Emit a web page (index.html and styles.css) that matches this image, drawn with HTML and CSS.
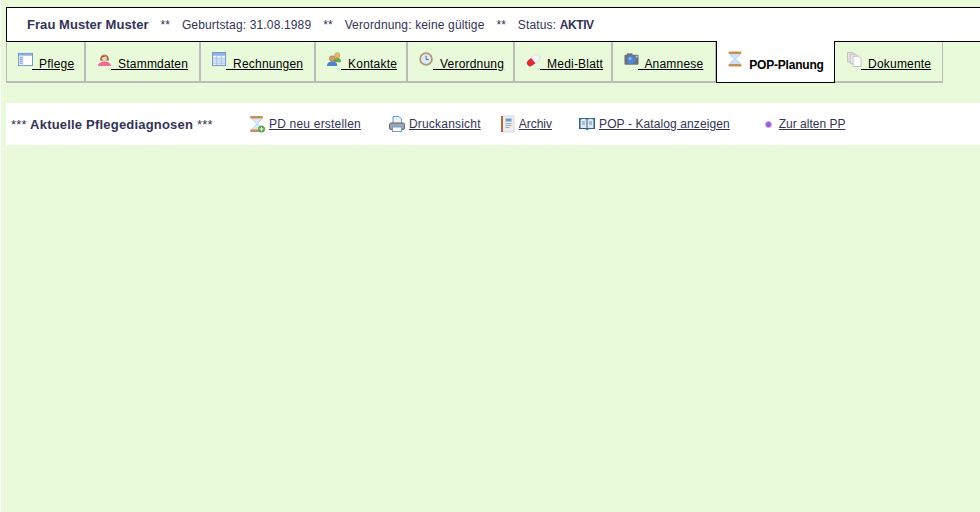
FILE: index.html
```html
<!DOCTYPE html>
<html lang="de">
<head>
<meta charset="utf-8">
<title>POP-Planung</title>
<link rel="stylesheet" href="styles.css">
</head>
<body>
<header class="patient">
  <strong class="name">Frau Muster Muster</strong>
  <span class="sep">**</span>
  <span class="info">Geburtstag: 31.08.1989</span>
  <span class="sep">**</span>
  <span class="info">Verordnung: keine gültige</span>
  <span class="sep">**</span>
  <span class="info">Status: <b class="status">AKTIV</b></span>
</header>
<nav class="tabs">
  <a class="tab w79" href="#"><svg class="ticon" viewBox="0 0 16 16"><rect x=".5" y="1.500" width="15" height="13" fill="#fff" stroke="#6d93c9"/><rect x="1" y="2" width="14" height="2" fill="#8fb2e2"/><rect x="1" y="4" width="5" height="10" fill="#dfe9f6"/><path d="M2 6h3M2 8h3M2 10h3M2 12h3" stroke="#7d93b5"/></svg><span class="tlabel">&nbsp; Pflege</span></a>
  <a class="tab w115" href="#"><svg class="ticon" viewBox="0 0 16 16"><path d="M3.500 9C2.500 1 13.500 1 12.500 9z" fill="#8a5230"/><path d="M1 15c0-2 1.500-3 3-4 1-1 7-1 8 0 1.500 1 3 2 3 4z" fill="#ee6d96"/><circle cx="8" cy="6.500" r="3" fill="#f8d0b4"/><path d="M5 6c0-3 6-3 6 0L9 4.500z" fill="#8a5230"/></svg><span class="tlabel">&nbsp; Stammdaten</span></a>
  <a class="tab w115" href="#"><svg class="ticon" viewBox="0 0 16 16"><rect x=".5" y=".5" width="14" height="14" fill="#eef4fc" stroke="#6d93c9"/><rect x="1" y="1" width="13" height="3" fill="#8fb2e2"/><path d="M1 6.500h13M1 8.500h13M1 10.500h13M1 12.500h13M5 4v10M10 4v10" stroke="#a9c2e4"/></svg><span class="tlabel">&nbsp; Rechnungen</span></a>
  <a class="tab w92" href="#"><svg class="ticon" viewBox="0 0 16 16"><circle cx="11" cy="3.500" r="2.800" fill="#e8b765" stroke="#b5843f" stroke-width=".5"/><path d="M7 11c0-4 2-4.500 4-4.500s4 .5 4 4.500z" fill="#69a84f"/><circle cx="5.500" cy="7" r="3" fill="#d79a68" stroke="#8a5a35" stroke-width=".5"/><path d="M0 15c0-4 2.500-5 5.500-5s5.500 1 5.500 5z" fill="#4d83d0"/></svg><span class="tlabel">&nbsp; Kontakte</span></a>
  <a class="tab w107" href="#"><svg class="ticon" viewBox="0 0 16 16"><circle cx="7.500" cy="7.500" r="6.300" fill="#dfe8f5" stroke="#b09a72" stroke-width="1.800"/><path d="M7.500 4v4h3" fill="none" stroke="#51678a"/></svg><span class="tlabel">&nbsp; Verordnung</span></a>
  <a class="tab w98" href="#"><svg class="ticon" viewBox="0 0 16 16"><path d="M2.200 9 9 3.500a3.500 3.500 0 0 1 4.500 5.500L7 14.200A3.500 3.500 0 0 1 2.200 9z" fill="#f6f6f8" stroke="#cfcfd4" stroke-width=".6"/><path d="M2.200 9 5.500 6.300l4.600 5.600L7 14.200A3.500 3.500 0 0 1 2.200 9z" fill="#de2c33"/></svg><span class="tlabel">&nbsp; Medi-Blatt</span></a>
  <a class="tab w104" href="#"><svg class="ticon" viewBox="0 0 16 16"><rect x="3" y="1.500" width="6" height="3" fill="#666b72"/><rect x=".5" y="3" width="15" height="10.500" rx="1" fill="#6d727a"/><circle cx="7.500" cy="8.200" r="4.500" fill="#4c88d8"/><circle cx="6.500" cy="7" r="1.500" fill="#9cc3ef"/><rect x="12.500" y="4" width="2" height="2" fill="#c9ccd0"/></svg><span class="tlabel">&nbsp; Anamnese</span></a>
  <a class="tab w119 active" href="#"><svg class="ticon" viewBox="0 0 16 16"><path d="M3 2h10v2L8.500 8 13 12v2H3v-2l4.500-4L3 4z" fill="#cfe2f8" stroke="#9fbde0" stroke-width=".6"/><rect x="1.500" y=".5" width="13" height="2.500" rx="1.200" fill="#c4935c"/><rect x="1.500" y="13" width="13" height="2.500" rx="1.200" fill="#c4935c"/></svg><span>&nbsp; POP-Planung</span></a>
  <a class="tab w108" href="#"><svg class="ticon" viewBox="0 0 16 16"><path d="M.5.500h6l2 2v8h-8z" fill="#e4e4e4" stroke="#bdbdbd"/><path d="M3.500 2.500h6l2 2v8h-8z" fill="#eee" stroke="#bdbdbd"/><path d="M6.500 4.500h6l2.500 2.500v8.500h-8.500z" fill="#fff" stroke="#bdbdbd"/></svg><span class="tlabel">&nbsp; Dokumente</span></a>
</nav>
<section class="actions">
  <h2 class="title"><span class="stars">***</span> Aktuelle Pflegediagnosen <span class="stars">***</span></h2>
  <a class="act a1" href="#"><svg class="aicon" viewBox="0 0 16 18"><path d="M3 2h10v2L8.500 9 13 14v2H3v-2l4.500-5L3 4z" fill="#dbe8f7" stroke="#a9c3e2" stroke-width=".6"/><rect x="1" y="1" width="13" height="2.500" rx="1.200" fill="#c4935c"/><rect x="1" y="14.500" width="13" height="2.500" rx="1.200" fill="#c4935c"/><circle cx="12.500" cy="14" r="3.500" fill="#5aa845"/><path d="M12.500 12v4M10.500 14h4" stroke="#fff"/></svg><span>PD neu erstellen</span></a>
  <a class="act a2" href="#"><svg class="aicon" viewBox="0 0 16 18"><path d="M4 1.500h6l2.500 2.500v5H4z" fill="#eaf2fc" stroke="#6d9bd4"/><rect x=".5" y="8" width="15" height="6.500" rx="1.500" fill="#a3a5aa" stroke="#64666b"/><rect x="3.500" y="12" width="9" height="4.500" fill="#fff" stroke="#6d9bd4"/></svg><span>Druckansicht</span></a>
  <a class="act a3" href="#"><svg class="aicon narrow" viewBox="0 0 14 18"><rect x="1" y="1" width="12" height="16" fill="#eee" stroke="#c6c6c6" stroke-width=".6"/><rect x="0" y="1" width="2" height="16" fill="#b7683a"/><rect x="4.500" y="3.500" width="6" height="3" fill="#6d9bd4"/><path d="M4.500 8.500h6M4.500 10.500h6M4.500 12.500h4" stroke="#9aa9bd"/></svg><span>Archiv</span></a>
  <a class="act a4" href="#"><svg class="aicon wide" viewBox="0 0 16 16"><path d="M0 2h16v11H9.500L8 14.500 6.500 13H0z" fill="#2f5f93"/><path d="M1.500 3.500C3.500 2.500 6 2.500 7.500 3.500V12H1.500zM14.500 3.500C12.500 2.500 10 2.500 8.500 3.500V12h6z" fill="#dfe7ef"/><path d="M3 6h3M3 8h3M10 6h3M10 8h3" stroke="#7890ac"/></svg><span>POP - Katalog anzeigen</span></a>
  <a class="act a5" href="#"><span class="dot"></span><span>Zur alten PP</span></a>
</section>
</body>
</html>
```
FILE: styles.css
```css
html, body { height: 100%; }
body {
  margin: 0;
  padding: 7px 0 0 5px;
  box-sizing: border-box;
  height: 512px;
  overflow: hidden;
  background: #e9fadb;
  border-left: 1px solid #fff;
  font-family: "Liberation Sans", Arial, sans-serif;
  font-size: 12px;
  color: #333355;
}
.patient {
  display: flex;
  align-items: center;
  height: 33px;
  padding-left: 20px;
  background: #fff;
  border: solid #000;
  border-width: 1px 0 1px 1px;
  white-space: pre;
}
.name { font-size: 13px; letter-spacing: .05px; }
.info { letter-spacing: .15px; }
.status { letter-spacing: -.4px; }
.sep { margin: 0 12px; }
.tabs {
  display: flex;
  height: 41px;
}
.tab {
  display: block;
  box-sizing: border-box;
  height: 41px;
  padding: 10px 0 0 11px;
  border: solid #bbb;
  border-width: 0 1px 2px 1px;
  color: #000;
  letter-spacing: .2px;
  text-decoration: none;
  white-space: nowrap;
}
.tlabel { text-decoration: underline; }
.ticon { width: 15px; height: 15px; margin-right: -1px; vertical-align: 1px; }
.w79 { width: 79px; }
.w115 { width: 115px; }
.w92 { width: 92px; }
.w107 { width: 107px; }
.w98 { width: 98px; }
.w104 { width: 104px; }
.w108 { width: 108px; border-left: 0; padding-left: 12px; }
.w119 { width: 119px; }
.active {
  background: #fff;
  font-weight: bold;
  letter-spacing: -.2px;
  border: 1px solid #000;
  border-top: 0;
  margin-top: -1px;
  height: 42px;
  padding: 10px 0 0 10px;
}
.active .ticon { width: 16px; height: 16px; margin-right: 0; vertical-align: 2px; }
.actions {
  display: flex;
  align-items: center;
  height: 42px;
  margin-top: 20px;
  background: #fff;
}
.title {
  margin: 0 0 0 5px;
  width: 238px;
  flex: none;
  font-size: 13px;
  font-weight: bold;
  letter-spacing: .2px;
}
.stars { font-weight: normal; }
.act {
  display: flex;
  align-items: center;
  gap: 4px;
  color: #333355;
  letter-spacing: .2px;
  text-decoration: underline;
  white-space: nowrap;
}
.aicon { width: 16px; height: 18px; flex: none; }
.aicon.wide { height: 16px; }
.aicon.narrow { width: 14px; }
.a2 { margin-left: 28px; }
.a3 { margin-left: 20px; letter-spacing: 0; }
.a4 { margin-left: 27px; letter-spacing: .1px; }
.a5 { margin-left: 35px; gap: 7px; letter-spacing: 0; }
.dot {
  width: 7px;
  height: 7px;
  border-radius: 50%;
  background: #9b5fdb;
  border: 1px solid #c9a5ef;
  box-sizing: border-box;
}
```
